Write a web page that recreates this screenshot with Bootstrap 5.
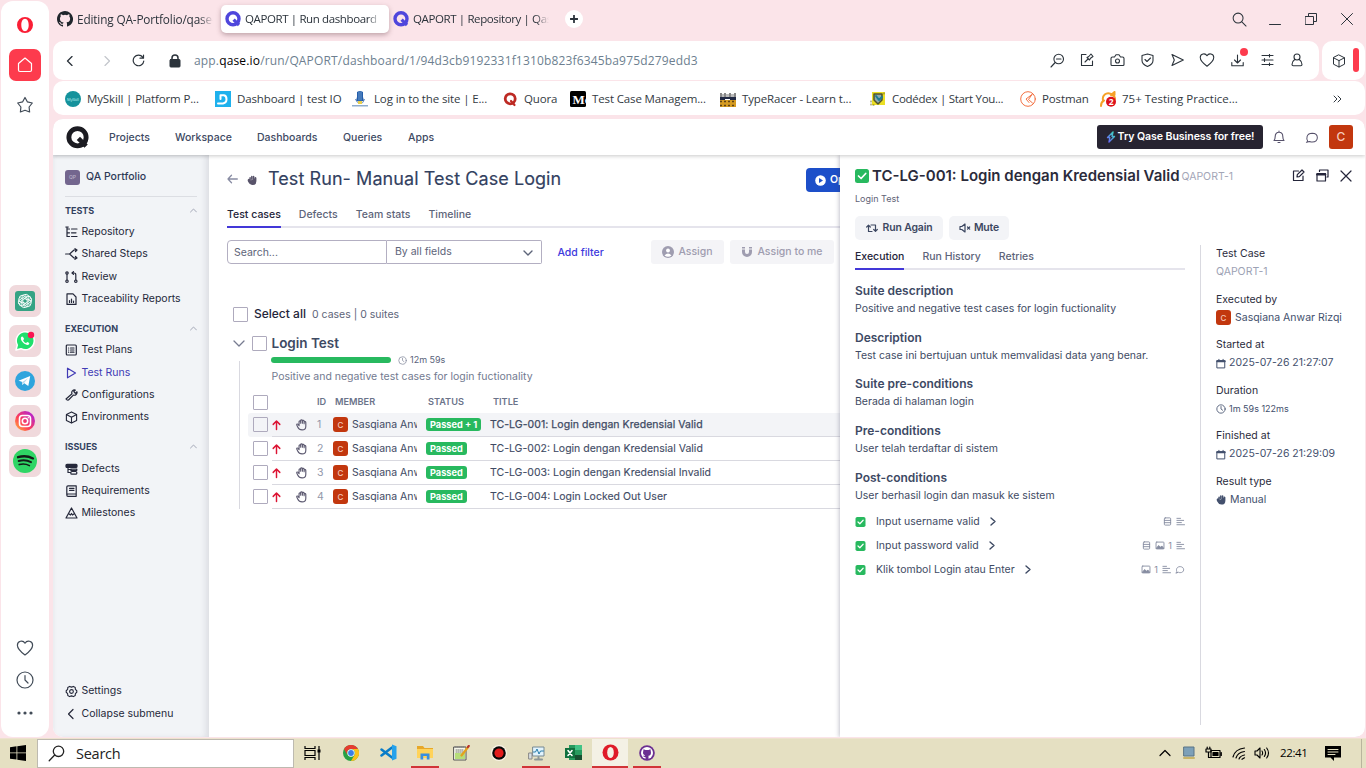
<!DOCTYPE html>
<html lang="en">
<head>
<meta charset="utf-8">
<title>QAPORT | Run dashboard</title>
<link href="https://cdn.jsdelivr.net/npm/bootstrap@5.3.0/dist/css/bootstrap.min.css" rel="stylesheet">
<style>
body{width:1366px;height:768px;overflow:hidden;background:#fbe4e9;font-family:"Open Sans","Noto Sans",sans-serif;font-size:12px;line-height:16px;color:#2b333b}
svg{display:block;flex:none;fill:none}
svg:not([stroke]){stroke:currentColor}
svg:not([stroke-linecap]){stroke-linecap:round;stroke-linejoin:round}
.white{background:#fff}
.desk{height:738px;padding-left:1px;padding-right:1px}
.rail{width:48px;height:736px;margin-top:1px;border-radius:12px;color:#414b57}
.tile{width:32px;height:32px;border-radius:7px;background:#f0d9dc;margin-bottom:8px}
.tile.home{background:#fd3b4d;color:#fff}
.browser{margin-left:4px;width:1312px}
.tabstrip{height:41px;padding-top:5px}
.tabx{width:168px;height:28px;padding:0 8px 0 4px;gap:4px;border-radius:5px;font-size:11.8px;letter-spacing:-.15px}
.tabx.tight{font-size:11.5px;letter-spacing:-.38px}
.tabx.on{background:#fff;box-shadow:0 2px 5px rgba(80,40,50,.35)}
.tabx span{width:140px;overflow:hidden;white-space:nowrap;-webkit-mask-image:linear-gradient(90deg,#000 90%,transparent)}
.plus{width:18px;height:18px;margin-left:8px}
.win{width:36px;height:28px}
.addr{height:39px;border-radius:10px}
.cell{width:30px}
.url{font-size:12px;color:#6d7f90;letter-spacing:.16px}
.marks{height:34px;margin-top:1px;border-radius:10px;padding:1px 0 0 12px;font-size:11.5px;letter-spacing:-.13px;color:#333a42}
.bm{gap:6px;width:150px;white-space:nowrap}
.app{margin-top:4px;height:618px;border-radius:10px;overflow:hidden;font-family:Inter,sans-serif;font-size:10.5px;color:#3e4a63;position:relative}
.apphead{height:36px;box-shadow:0 1px 4px rgba(0,0,0,.22);z-index:5;position:relative;padding:0 12px 0 13px}
.apphead a{color:#414b66;text-decoration:none;font-weight:500}
.try{width:166px;height:24px;border-radius:3px;background:#272431;color:#fff;font-weight:600;font-size:10.6px;letter-spacing:-.08px}
.av{width:15px;height:15px;border-radius:3px;background:#c2370e;color:#f4c9ba;font-size:8px;font-weight:500}
.side{width:156px;height:582px;background:#f2f4f7;padding:10px 12px 12px;box-shadow:inset -5px 0 6px -2px rgba(60,60,80,.12),inset 3px 0 4px -2px rgba(60,60,80,.06);color:#25283a}
.side .it{height:22.4px;gap:3.5px}
.side .hd{height:28.8px;padding-bottom:3px;font-size:9px;line-height:14px;font-weight:700;color:#33415f}
.side .hd svg{color:#a3a7b6}
.proj{height:31px;border-bottom:1px solid #dcdee3;padding-bottom:8px;gap:6px;font-weight:500;color:#2f3a57;margin-top:1px}
.main{width:631px;height:582px;padding-left:18px;overflow:hidden}
.ttl{height:24px;margin-top:12px;gap:10px}
.ttl h1{font-size:18px;font-weight:400;line-height:24px;color:#33415f;-webkit-text-stroke:.15px #33415f;width:293px;letter-spacing:.07px}
.openbtn{width:110px;height:24px;background:#1d4fc9;margin:2px 0 0 235px;padding:0 0 0 9px;gap:4px;font-size:10.5px;font-weight:600;border-radius:4px;color:#fff}
.tabrow{border-bottom:2px solid #e5e4ec;gap:18px;height:26px;font-weight:500;color:#5d6479}
.tabrow b{font-weight:500;color:#24253a;border-bottom:2px solid #4338d8;margin-bottom:-2px}
.tabrow>*{height:26px;line-height:25px;white-space:nowrap}
.fld{height:24px;border:1px solid #b3afc2;color:#5d6479}
.dis{height:24px;background:#f4f4f7;border-radius:3px;color:#9f9db0;font-weight:500;gap:4px}
.cb{width:15px;height:15px;border:1px solid #aeaabd;border-radius:1px;flex:none}
.tr0{height:24px;margin-left:8px;width:600px;padding-left:5px;white-space:nowrap}
.tr0 .cb{margin-top:-1px}
.tr0.act{background:#f3f4f7;border-radius:3px}
.tr0 .ln{height:24px;border-bottom:1px solid #d9d9e0;width:568px;margin-left:4px}
.tr0 .ttx{-webkit-text-stroke:.1px}
.act .ttx{-webkit-text-stroke:.25px;letter-spacing:.05px}
.passed{height:13px;line-height:13px;background:#28b95f;color:#fff;font-weight:700;font-size:9.2px;border-radius:3px;padding:0 4px}
.panel{position:absolute;left:787px;top:36px;width:525px;height:582px;background:#fff;box-shadow:-1px 0 4px rgba(60,60,90,.3);padding:10px 12px 12px 15px}
.pbtn{height:24px;background:#f3f4f7;border-radius:5px;font-weight:600;font-size:10.4px;letter-spacing:-.12px;color:#3c4761;gap:5px}
.sec{height:46.7px}
.sec h6{font-size:12px;font-weight:600;line-height:18px;margin:0;color:#3d4964}
.sec p{margin:0;line-height:17px;white-space:nowrap}
.step{height:24px}
.step .ics{color:#868ca0;gap:4px;font-size:9px}
.meta{height:45.6px;white-space:nowrap}
.meta .lb{color:#2a2b3c;line-height:18px;height:18px}
.meta .vl{height:18px;gap:3px;color:#43506d}
.task{height:30px;background:#e5e0c2;color:#000;border-top:1px solid #eee2cf}
.sbox{width:257px;height:29px;border:1px solid #bdbab0;font-size:14.5px;letter-spacing:-.25px;color:#222}
.tk{height:29px;width:37px;padding-bottom:2px}
.tk.open{box-shadow:inset 0 -2px #d13438}
</style>
</head>
<body>
<svg width="0" height="0" class="position-absolute">
<defs>
<linearGradient id="ig" x1="0" y1="1" x2="1" y2="0"><stop offset="0" stop-color="#ffc13a"/><stop offset=".4" stop-color="#ff3f55"/><stop offset="1" stop-color="#a21cf0"/></linearGradient>
<linearGradient id="bolt" x1="0" y1="1" x2="1" y2="0"><stop offset="0" stop-color="#6f5cff"/><stop offset="1" stop-color="#38e0b8"/></linearGradient>
<symbol id="q" viewBox="0 0 16 16"><circle cx="8" cy="7.800" r="6" fill="none" stroke-width="3.400"/><path d="M8.600 8.600 14 14" fill="none" stroke-width="3.200" stroke-linecap="butt"/></symbol>
<symbol id="hand" viewBox="0 0 16 16"><path d="M4.500 9V4.800M7 7V2.800M9.600 7V3M12.200 8V4.600M4.500 9 2.600 7.400C1.500 8 2 9 2.800 10.500c1 2.200 2.600 3.800 5 3.800 3.200 0 4.800-2 4.800-5V5" fill="currentColor" stroke-width="2.200"/></symbol>
<symbol id="hando" viewBox="0 0 16 16"><path d="M5 9.500V4.500a1 1 0 0 1 2 0M7 6.500V3.300a1 1 0 0 1 2.100 0v3.200M9.100 4a1 1 0 0 1 2.100 0v3M11.200 5.500a1 1 0 0 1 2.100 0V10c0 3-2 4.600-4.600 4.600-3 0-4.400-1.600-5.400-3.600L2.200 8.600c-.5-1.300 1-1.600 1.700-.7L5 9.500" fill="none" stroke-width="1.400"/></symbol>
<symbol id="chk" viewBox="0 0 14 14"><rect width="14" height="14" rx="2.500" fill="#28b95f" stroke="none"/><path d="m3.500 7 2.600 2.500 4.600-5" stroke="#fff" stroke-width="1.700" fill="none"/></symbol>
<symbol id="clk" viewBox="0 0 12 12"><circle cx="6" cy="6" r="5"/><path d="M6 3v3l2 1.500"/></symbol>
<symbol id="cal" viewBox="0 0 12 12"><path d="M1.500 2.500h9v8.800h-9zM3.500 1v2M8.500 1v2" stroke-width="1.200"/><path d="M1.500 3.400h9" stroke-width="2.400"/></symbol>
<symbol id="up" viewBox="0 0 12 12"><path d="M6 10.800V2M2.400 5.300 6 1.700l3.600 3.600" stroke="#dc1433" stroke-width="1.600"/></symbol>
<symbol id="heart" viewBox="0 0 18 18"><path d="M9 16C5 13 1.400 10 1.400 6.200 1.400 1.800 7 .8 9 4.200c2-3.400 7.600-2.400 7.600 2C16.600 10 13 13 9 16z"/></symbol>
<symbol id="lines" viewBox="0 0 10 10"><path d="M1 1.500h4M1 3.800h7.500M1 6.200h5M1 8.600h8.500"/></symbol>
<symbol id="db" viewBox="0 0 10 10"><rect x="1.500" y="1" width="7" height="8" rx="1"/><path d="M1.500 3.800h7M1.500 6.300h7"/></symbol>
<symbol id="img" viewBox="0 0 10 10"><rect x=".6" y="1.200" width="8.800" height="7.600" rx=".8"/><path d="m1 8 2.500-3 2 2L7 5.500 9 8z" fill="currentColor"/></symbol>
<symbol id="cub" viewBox="0 0 14 14"><path d="m7 1 5.500 2.800v6.400L7 13l-5.500-2.800V3.800zM1.500 3.800 7 6.600l5.500-2.800M7 6.600V13"/></symbol>
<symbol id="chat" viewBox="0 0 14 14"><path d="M2.600 11.500C.4 8.500 1 2.500 7.200 2.500c7.400.2 7.400 9.500 0 9.400-1.200 0-1.800-.2-2.600-.6L1 12.200z"/></symbol>
</defs></svg>

<div class="desk d-flex">
 <aside class="rail white d-flex flex-column align-items-center">
  <svg width="18" height="18" viewBox="0 0 18 18" style="margin-top:15px"><path fill="#fa1e35" stroke="none" fill-rule="evenodd" d="M9 1a8 8 0 1 1 0 16A8 8 0 0 1 9 1zm0 1.800c-2.300 0-3.700 2.800-3.700 6.200s1.400 6.200 3.700 6.200 3.700-2.800 3.700-6.200S11.300 2.800 9 2.800z"/></svg>
  <div class="tile home d-flex align-items-center justify-content-center" style="margin-top:15px"><svg width="18" height="18" viewBox="0 0 18 18" stroke-width="1.200"><path d="M2.500 7.500 9 2l6.500 5.500V14q0 1.500-1.500 1.500H4q-1.500 0-1.500-1.500z"/></svg></div>
  <svg width="18" height="18" viewBox="0 0 18 18" stroke-width="1.200" style="margin-top:7px"><path d="m9 1.500 2.300 4.300 5 1.200-3.200 4 .5 5L9 14.300 4.400 16l.5-5-3.200-4 5-1.200z"/></svg>
  <div class="d-flex flex-column" style="margin-top:171px">
   <div class="tile d-flex align-items-center justify-content-center"><svg width="20" height="20" viewBox="0 0 20 20"><rect width="20" height="20" rx="3" fill="#35a384" stroke="none"/><g stroke="#fff" stroke-width=".9"><path id="pt" d="M10 3.500c2-.8 4 .8 3.800 2.800v4L10 12.500M7 7.800v-2.500Q8.500 2.500 11 4"/><use href="#pt" transform="rotate(60 10 10)"/><use href="#pt" transform="rotate(120 10 10)"/><use href="#pt" transform="rotate(180 10 10)"/><use href="#pt" transform="rotate(240 10 10)"/><use href="#pt" transform="rotate(300 10 10)"/></g></svg></div>
   <div class="tile d-flex align-items-center justify-content-center"><svg width="20" height="20" viewBox="0 0 20 20" stroke="none"><path d="m1 19 1.300-5A9 9 0 1 1 6 17.700z" fill="#20df6c" stroke="#fff" stroke-width="1.500"/><path d="M7 5.500c-2 1-1.200 4 1.200 6.200s5 3 6 1.200c.3-.9 0-1.200-1.900-2l-1.200 1.200c-1.500-.6-2.400-1.500-3-2.900l1-1.100c-.7-1.700-1-2.600-2.100-2.600z" fill="#fff"/><circle cx="16" cy="4" r="3.200" fill="#fa1653"/></svg></div>
   <div class="tile d-flex align-items-center justify-content-center"><svg width="20" height="20" viewBox="0 0 20 20" stroke="none"><circle cx="10" cy="10" r="10" fill="#2fa4dd"/><path d="m3.500 9.800 11.700-4.700-1.900 10-4-2.800-2 1.700-.5-3.300z" fill="#fff"/><path d="m7 11.300 6-4-4 4.800-1.600 1.600z" fill="#b5d9ed"/></svg></div>
   <div class="tile d-flex align-items-center justify-content-center"><svg width="20" height="20" viewBox="0 0 20 20"><circle cx="10" cy="10" r="10" fill="url(#ig)" stroke="none"/><g stroke="#fff" stroke-width="1.600"><rect x="4.500" y="4.500" width="11" height="11" rx="3"/><circle cx="10" cy="10" r="2.700"/></g><circle cx="13.300" cy="6.700" r=".8" fill="#fff" stroke="none"/></svg></div>
   <div class="tile d-flex align-items-center justify-content-center"><svg width="24" height="24" viewBox="0 0 24 24" stroke="#131c18"><circle cx="12" cy="12" r="12" fill="#2fd565" stroke="none"/><path d="M5 8.200q8-2.400 15 1.200" stroke-width="2.300"/><path d="M5.700 12q6.500-2 12.300 1.100" stroke-width="2"/><path d="M6.200 15.600q5.500-1.500 10.200 1" stroke-width="1.600"/></svg></div>
  </div>
  <svg width="18" height="18" stroke-width="1.200" style="margin-top:154px"><use href="#heart"/></svg>
  <svg width="18" height="18" viewBox="0 0 18 18" stroke-width="1.200" style="margin-top:14px"><circle cx="9" cy="9" r="8"/><path d="M9 4.500V9l3 3"/></svg>
  <svg width="18" height="6" viewBox="0 0 18 6" stroke="none" style="margin-top:21px;fill:#414b57"><circle cx="3" cy="3" r="1.600"/><circle cx="9" cy="3" r="1.600"/><circle cx="15" cy="3" r="1.600"/></svg>
 </aside>

 <div class="browser">
  <div class="tabstrip d-flex">
   <div class="tabx d-flex align-items-center"><svg width="16" height="16" viewBox="0 0 16 16"><path style="fill:#20262c" stroke="none" d="M8 0C3.580 0 0 3.580 0 8c0 3.540 2.290 6.530 5.470 7.590.4.070.55-.17.55-.38v-1.490c-2 .37-2.530-.49-2.690-.94-.09-.23-.48-.94-.82-1.130-.28-.15-.68-.52-.01-.53.63-.01 1.080.58 1.230.82.72 1.210 1.870.87 2.330.66.07-.52.28-.87.51-1.070-1.780-.2-3.640-.89-3.640-3.950 0-.87.31-1.590.82-2.150-.08-.2-.36-1.020.08-2.120 0 0 .67-.21 2.200.82a7.600 7.600 0 0 1 4 0c1.530-1.040 2.200-.82 2.200-.82.44 1.100.16 1.920.08 2.120.51.56.82 1.270.82 2.150 0 3.070-1.870 3.750-3.650 3.950.29.25.54.73.54 1.480v2.200c0 .21.15.46.55.38A8 8 0 0 0 8 0z"/></svg><span>Editing QA-Portfolio/qase-</span></div>
   <div class="tabx tight on d-flex align-items-center"><svg width="16" height="16" stroke="#4f46dc"><use href="#q"/></svg><span>QAPORT | Run dashboard</span></div>
   <div class="tabx tight d-flex align-items-center"><svg width="16" height="16" stroke="#4f46dc"><use href="#q"/></svg><span>QAPORT | Repository | Qase</span></div>
   <div class="plus white rounded-circle d-flex align-items-center justify-content-center" style="margin-top:5px"><svg width="8" height="8" viewBox="0 0 8 8" stroke-width="1.800"><path d="M4 .5v7M.5 4h7"/></svg></div>
   <div class="d-flex ms-auto">
    <div class="win d-flex align-items-center justify-content-center"><svg width="15" height="15" viewBox="0 0 16 16" stroke-width="1.100"><circle cx="6.500" cy="6.500" r="5.300"/><path d="m10.500 10.500 4.500 4.500"/></svg></div>
    <div class="win d-flex align-items-center justify-content-center"><svg width="12" height="12" viewBox="0 0 12 12"><path d="M.5 11.500h11"/></svg></div>
    <div class="win d-flex align-items-center justify-content-center"><svg width="12" height="12" viewBox="0 0 12 12"><path d="M.5 3.500h8v8h-8zM3.500 3.500v-3h8v8h-3"/></svg></div>
    <div class="win d-flex align-items-center justify-content-center"><svg width="12" height="12" viewBox="0 0 12 12"><path d="m.5.5 11 11m0-11-11 11"/></svg></div>
   </div>
  </div>

  <div class="d-flex" style="gap:3px">
   <div class="addr white d-flex align-items-center" style="width:1266px;padding-left:13px">
    <svg width="8" height="10" viewBox="0 0 8 10" stroke-width="1.300"><path d="M6 .5 1.500 5 6 9.500"/></svg>
    <svg width="8" height="10" viewBox="0 0 8 10" stroke="#c3c6cc" stroke-width="1.200" style="margin-left:29px"><path d="M2 .5 6.500 5 2 9.500"/></svg>
    <svg width="13" height="13" viewBox="0 0 13 13" stroke-width="1.200" style="margin-left:21px"><path d="M10.800 3.300A5.300 5.300 0 1 0 11.800 7M11.500 1v3.200H8"/></svg>
    <svg width="12" height="14" viewBox="0 0 12 14" style="margin-left:24px"><path d="M3 6V4a3 3 0 0 1 6 0v2" stroke-width="1.500"/><rect x="1" y="5.500" width="10" height="7.500" rx=".8" fill="#2b333b" stroke-width="1"/></svg>
    <div class="url" style="margin-left:13px">app.<span class="text-black">qase.io</span>/run/QAPORT/dashboard/1/94d3cb9192331f1310b823f6345ba975d279edd3</div>
    <div class="d-flex ms-auto align-items-center" style="margin-right:7px;padding-bottom:1px">
     <div class="cell d-flex justify-content-center"><svg width="15" height="15" viewBox="0 0 15 15" stroke-width="1.100"><circle cx="8.700" cy="6" r="4.800"/><path d="M6.500 6h4.500M5.200 9.500 1 14"/></svg></div>
     <div class="cell d-flex justify-content-center"><svg width="14" height="14" viewBox="0 0 14 14" stroke-width="1.100"><path d="M6 1.500H1.500v11h11V8M5 9l3-3M7 4.500l2.500 2.500 1-1.800L13 3.500 11 1 8.800 3.500z"/></svg></div>
     <div class="cell d-flex justify-content-center"><svg width="15" height="14" viewBox="0 0 15 14" stroke-width="1.100"><path d="M2.500 4h2L6 1.800h3L10.500 4h2q1.500 0 1.500 1.500v6q0 1-1 1H2q-1 0-1-1v-6Q1 4 2.500 4z"/><circle cx="7.500" cy="8" r="2"/></svg></div>
     <div class="cell d-flex justify-content-center"><svg width="13" height="14" viewBox="0 0 13 14" stroke-width="1.100"><path d="M6.500 1 12 2.500v5c0 3-3 5-5.500 6C4 12.500 1 10.500 1 7.500v-5zM4 6.500l2 2 3.500-3.500"/></svg></div>
     <div class="cell d-flex justify-content-center"><svg width="13" height="14" viewBox="0 0 13 14" stroke-width="1.100"><path d="M1 1.500 12.300 7 1 12.500 3.300 7z"/></svg></div>
     <div class="cell d-flex justify-content-center"><svg width="16" height="16" stroke-width="1.200"><use href="#heart"/></svg></div>
     <div class="cell d-flex justify-content-center position-relative"><svg width="13" height="14" viewBox="0 0 13 14" stroke-width="1.100"><path d="M.8 9.500v3.300h11.400V9.500M6.500 2v7.500M3.500 7l3 3 3-3"/></svg><i class="position-absolute rounded-circle" style="width:8px;height:8px;background:#fd3b4d;left:18px;top:-5px"></i></div>
     <div class="cell d-flex justify-content-center"><svg width="13" height="12" viewBox="0 0 13 12" stroke-width="1.100"><path d="M1 1.500h11M1 6h11M1 10.500h11M8.500 0v3M3.500 4.500v3M8.500 9v3"/></svg></div>
     <div class="cell d-flex justify-content-center"><svg width="12" height="14" viewBox="0 0 12 14" stroke-width="1.100"><circle cx="6" cy="4" r="3"/><path d="M3.700 6.500C1.500 8 1 10 1 11.500q0 1.200 1.200 1.200h7.600q1.200 0 1.200-1.200C11 10 10.500 8 8.300 6.500"/></svg></div>
    </div>
   </div>
   <div class="addr white d-flex align-items-center" style="width:43px;padding-left:10px"><svg width="14" height="14"><use href="#cub"/></svg><i class="rounded-pill" style="width:6px;height:24px;background:#fd3b4d;margin-left:7px;margin-top:-1px"></i></div>
  </div>

  <div class="marks white d-flex align-items-center">
   <div class="bm d-flex align-items-center"><svg width="16" height="16" viewBox="0 0 16 16"><circle cx="8" cy="8" r="8" fill="#15929c" stroke="none"/><text x="2" y="9.500" font-size="4" fill="#bdeff0" stroke="none" letter-spacing="-.2">MySkill</text></svg>MySkill | Platform P...</div>
   <div class="bm d-flex align-items-center" style="width:137px"><svg width="16" height="16" viewBox="0 0 16 16"><path fill="#1eb1ed" stroke="none" d="M0 0h16v16H0z"/><path d="M5.500 8V4.300H9q2.500.5 2.500 4T8 12.500H3" stroke="#fff" stroke-width="2"/></svg>Dashboard | test IO</div>
   <div class="bm d-flex align-items-center"><svg width="16" height="16" viewBox="0 0 16 16" stroke="none"><path fill="#235daa" d="M5 1q3-2 6 0v5l1 4H4l1-4z"/><path d="M7 1v8M9 1v8" stroke="#8bb5df" stroke-width=".7"/><path d="M3.500 8.500Q5 12 8 12.500t4.500-4" stroke="#5f87b9" fill="none"/><path fill="#e8cf4a" d="M6 10h4v3H6z"/><path fill="#8fadcd" d="M0 14h16v1.500H0z"/></svg>Log in to the site | E...</div>
   <div class="bm d-flex align-items-center" style="width:68px"><svg width="16" height="16" viewBox="0 0 16 16" stroke="#bd2a24"><circle cx="8.200" cy="7.800" r="5" stroke-width="2.800"/><path d="m9 10 3.500 4" stroke-width="2.200"/></svg>Quora</div>
   <div class="bm d-flex align-items-center"><svg width="16" height="16" viewBox="0 0 16 16"><rect width="16" height="16" rx="1.500" fill="#000" stroke="none"/><text x="2.500" y="12.500" font-family="Liberation Serif" font-weight="bold" font-size="13" fill="#fff" stroke="none">Mc</text></svg>Test Case Managem...</div>
   <div class="bm d-flex align-items-center"><svg width="16" height="16" viewBox="0 0 16 16" stroke-linecap="butt"><path d="M0 3h16v3H0z" fill="#bbb" stroke="none"/><path d="M1 2v4M5 2v4M10 2v4M15 2v4" stroke="#888" stroke-width="2"/><path d="M0 7h16M0 9h5m5 0h6" stroke="#222a45" stroke-width="2"/><path d="M0 9h16v7H0z" fill="#d69b20" stroke="none"/><path d="M0 10.500h16M0 14.500h16" stroke="#5e4214" stroke-dasharray="2 2" stroke-width="1.500"/></svg>TypeRacer - Learn t...</div>
   <div class="bm d-flex align-items-center" style="letter-spacing:-.28px"><svg width="16" height="16" viewBox="0 0 16 16"><path fill="#ebdf25" stroke="none" d="M2 1h13v13H2z"/><path d="M4 3h8v6l-4 4-4-4z" fill="#8caab0" stroke="#52532b" stroke-width="1.500"/><path d="m6 5 3 4 3-3" stroke="#1e7c92" stroke-width="2"/><path d="M1 10v4h4M14 2v3" stroke="#78741f" stroke-dasharray="1 2"/></svg>Codédex | Start You...</div>
   <div class="bm d-flex align-items-center" style="width:80px"><svg width="16" height="16" viewBox="0 0 16 16" stroke="#f37042"><circle cx="8" cy="8" r="7.300"/><path d="M12 3.500 6 8l3 3.500M12 3.500 8.500 8.500l4 3.500"/></svg>Postman</div>
   <div class="bm d-flex align-items-center" style="letter-spacing:0"><svg width="16" height="16" viewBox="0 0 16 16"><path d="M11 3C6 .5 2 5 3 9M1 15Q1 11 4 9.500M14.500 1 11 4q4 .5 4 4M14.500 1V4" stroke="#f6a127" stroke-width="2"/><circle cx="11" cy="10.800" r="5" fill="#dd101b" stroke="none"/><text x="8.700" y="13.800" font-size="8.500" font-weight="bold" fill="#fff" stroke="none">2</text></svg>75+ Testing Practice...</div>
   <svg width="9" height="8" viewBox="0 0 9 8" class="ms-auto" style="margin-right:23px"><path d="m1 1 3 3-3 3M5 1l3 3-3 3"/></svg>
  </div>

  <div class="app white">
   <header class="apphead white d-flex align-items-center">
    <svg width="23" height="23" stroke="#1c1c22"><use href="#q"/></svg>
    <nav class="d-flex" style="margin-left:20px;padding-top:1px"><a style="width:66px">Projects</a><a style="width:82px">Workspace</a><a style="width:86px">Dashboards</a><a style="width:65px">Queries</a><a>Apps</a></nav>
    <div class="try ms-auto d-flex align-items-center justify-content-center"><svg width="10" height="12" viewBox="0 0 10 12" stroke="url(#bolt)" stroke-width="1.400" style="margin-right:2px"><path d="M7 1 1.500 6.500h2.300L3 11l5.500-5.500H6z"/></svg>Try Qase Business for free!</div>
    <svg width="12" height="14" viewBox="0 0 12 14" color="#56516b" stroke-width="1.100" style="margin-left:10px"><path d="M1 10.500c1.200-1.500 1.200-2.500 1.200-4C2.200 4 3.700 2.300 6 2.300S9.800 4 9.800 6.500c0 1.500 0 2.500 1.200 4zM6 1v1.300M5 12.500h2"/></svg>
    <svg width="14" height="13" color="#56516b" stroke-width="1.100" style="margin-left:20px"><use href="#chat"/></svg>
    <div class="av d-flex align-items-center justify-content-center" style="width:24px;height:24px;font-size:12px;margin-left:10px">C</div>
   </header>

   <div class="d-flex">
    <aside class="side d-flex flex-column">
     <div class="proj d-flex align-items-center"><div class="av d-flex align-items-center justify-content-center" style="background:#73668e;color:#b9b1c9;font-size:5px">QP</div>QA Portfolio</div>
     <div class="hd d-flex align-items-end justify-content-between" style="height:23.600px">TESTS<svg width="7" height="12" viewBox="0 0 7 12"><path d="m.5 6 3-3 3 3"/></svg></div>
     <div class="it d-flex align-items-center"><svg width="13" height="12" viewBox="0 0 13 12" stroke-width="1.200"><path d="M2 1v9.500h2.500M2 3h2.500M2 6.800h2.500M.8 1h2.500M6.500 3H12M6.500 6.800H11M6.500 10.500H12"/></svg>Repository</div>
     <div class="it d-flex align-items-center"><svg width="13" height="12" viewBox="0 0 13 12" stroke-width="1.200"><path d="M.6 6h4M12 2H9L4.600 6 9 10h3M10 .7 12 2l-1.500 1.500M10.500 8.500 12 10l-2 1.300"/></svg>Shared Steps</div>
     <div class="it d-flex align-items-center"><svg width="13" height="12" viewBox="0 0 13 12" stroke-width="1.200"><circle cx="2" cy="2" r="1.200"/><circle cx="2" cy="10.200" r="1.200"/><circle cx="10.800" cy="10.200" r="1.200"/><path d="M2 3.200V9M10.800 9V4Q10.800 2 9 2H7M8.500.6 7 2l1.500 1.400"/></svg>Review</div>
     <div class="it d-flex align-items-center"><svg width="13" height="12" viewBox="0 0 13 12" stroke-width="1.200"><path d="M2 .8h6L11 4v7.400H2zM4.500 9.500V7.500M6.500 9.500V6M8.500 9.500V8"/></svg>Traceability Reports</div>
     <div class="hd d-flex align-items-end justify-content-between">EXECUTION<svg width="7" height="12" viewBox="0 0 7 12"><path d="m.5 6 3-3 3 3"/></svg></div>
     <div class="it d-flex align-items-center"><svg width="13" height="12" viewBox="0 0 13 12" stroke-width="1.200"><rect x="1.300" y="1" width="10" height="10" rx="1"/><path d="M3.500 4h.2M3.500 6h.2M3.500 8.200h.2M5.500 4H9M5.500 6H9M5.500 8.200H9"/></svg>Test Plans</div>
     <div class="it d-flex align-items-center" style="color:#403ab5"><svg width="13" height="12" viewBox="0 0 13 12" stroke-width="1.200"><path d="M2.500 1.200v9.600L10.500 6z"/></svg>Test Runs</div>
     <div class="it d-flex align-items-center"><svg width="13" height="12" viewBox="0 0 13 12" stroke-width="1.200"><path d="M7 4.800C6 2.500 8 .5 10.300 1L8.800 2.700l1.500 1.600L12 2.800c.5 2.200-1.500 4-3.700 3.300L3.500 11q-1.500.5-2.500-1z"/></svg>Configurations</div>
     <div class="it d-flex align-items-center"><svg width="13" height="13" stroke-width="1.200"><use href="#cub"/></svg>Environments</div>
     <div class="hd d-flex align-items-end justify-content-between">ISSUES<svg width="7" height="12" viewBox="0 0 7 12"><path d="m.5 6 3-3 3 3"/></svg></div>
     <div class="it d-flex align-items-center"><svg width="13" height="12" viewBox="0 0 13 12" stroke-width="1.200"><rect x="1" y="1.300" width="11" height="3.200" rx="1" fill="currentColor"/><path d="M3 5v4.500h2.500M3 6.500h3"/><rect x="5.800" y="6" width="6" height="1.300"/><rect x="5.800" y="8.500" width="6" height="2.700" rx="1"/></svg>Defects</div>
     <div class="it d-flex align-items-center"><svg width="13" height="12" viewBox="0 0 13 12" stroke-width="1.200"><path d="M1.800 10V2q0-1.200 1.200-1.200h8.200v10.500H3Q1.800 11.300 1.800 10 2 9 3 9h8M4.500 3.300H9M4.500 5.300H9"/></svg>Requirements</div>
     <div class="it d-flex align-items-center"><svg width="13" height="12" viewBox="0 0 13 12" stroke-width="1.200"><path d="M6.500 1 12 11H1zM3.500 6.500l2 1.500 1-1.500 1 1.500 2-1.500"/></svg>Milestones</div>
     <div class="it d-flex align-items-center mt-auto"><svg width="13" height="13" viewBox="0 0 14 14" stroke-width="1.200"><path d="m5 1.500 2 .8 2-.8 2 1.200.2 2.100 1.500 1.400v1.600l-1.500 1.400-.2 2.100-2 1.200-2-.8-2 .8-2-1.200-.2-2.100L1.300 7.800V6.200l1.500-1.400L3 2.700z"/><circle cx="7" cy="7" r="2"/></svg>Settings</div>
     <div class="it d-flex align-items-center"><svg width="13" height="12" viewBox="0 0 13 12" stroke-width="1.200"><path d="M8 1.500 3.500 6 8 10.500"/></svg>Collapse submenu</div>
    </aside>

    <main class="main">
     <div class="ttl d-flex align-items-center">
      <svg width="11" height="10" viewBox="0 0 11 10" stroke="#888ca3" stroke-width="1.300"><path d="M10.300 5H1M4.500 1.300 1 5l3.500 3.700"/></svg>
      <svg width="11" height="12" color="#58536a" style="margin:1px 0 0 -1px"><use href="#hand"/></svg>
      <h1 class="m-0 text-nowrap flex-shrink-0">Test Run- Manual Test Case Login</h1>
      <div class="openbtn d-flex align-items-center justify-content-start flex-shrink-0"><svg width="11" height="11" viewBox="0 0 11 11" stroke="none"><circle cx="5.500" cy="5.500" r="5.300" fill="#fff"/><path d="M4 3v5l4-2.500z" fill="#1d4fc9"/></svg>Open</div>
     </div>
     <div class="tabrow d-flex" style="margin-top:11px"><b>Test cases</b><span>Defects</span><span>Team stats</span><span>Timeline</span></div>
     <div class="d-flex align-items-center" style="margin-top:12px">
      <div class="fld rounded-start-1 d-flex align-items-center" style="width:160px;padding:1px 0 0 6px">Search...</div>
      <div class="fld d-flex align-items-center justify-content-between" style="width:155px;border-left:0;border-radius:0 2px 2px 0;padding:0 8px 1px">By all fields<svg width="10" height="6" viewBox="0 0 10 6" stroke-width="1.400" style="margin-top:2px"><path d="m1 1 4 4 4-4"/></svg></div>
      <div style="color:#403add;font-weight:500;margin-left:15.500px;width:93.500px;padding-top:1px">Add filter</div>
      <div class="dis d-flex align-items-center justify-content-center" style="width:73px"><svg width="12" height="12" viewBox="0 0 12 12" stroke="none"><circle cx="6" cy="6" r="6" fill="#9f9db0"/><circle cx="6" cy="4.500" r="1.900" fill="#fff"/><path d="M2.500 9.500q3.500-4 7 0-3.500 2.500-7 0z" fill="#fff"/></svg>Assign</div>
      <div class="dis d-flex align-items-center justify-content-center text-nowrap" style="width:104px;margin-left:6px"><svg width="12" height="12" viewBox="0 0 12 12" stroke-width="3" stroke-linecap="butt"><path d="M2.500 3.500V6a3.500 3.500 0 0 0 7 0V3.500M2.500 1v1.500M9.500 1v1.500"/></svg>Assign to me</div>
     </div>
     <div class="d-flex align-items-center" style="margin-top:42px;margin-left:6px;height:16px"><i class="cb"></i><span style="font-size:12px;font-weight:500;color:#24253a;margin-left:6px;width:58px" class="text-nowrap">Select all</span><span style="color:#5d6479;padding-top:1px">0 cases | 0 suites</span></div>
     <div class="d-flex align-items-center" style="margin-top:12px;margin-left:6px;height:18px"><svg width="12" height="7" viewBox="0 0 12 7" stroke="#777b90" stroke-width="1.300"><path d="m1 1 5 5 5-5"/></svg><i class="cb" style="margin-left:7px"></i><span style="font-size:13.500px;font-weight:600;margin-left:4.500px">Login Test</span></div>
     <div class="d-flex align-items-center" style="height:15px;padding-top:1px;margin-left:44px"><i class="rounded-pill" style="width:120px;height:6px;background:#28b95f"></i><svg width="9" height="9" color="#858b9d" style="margin:0 3px 0 7px"><use href="#clk"/></svg><span style="font-size:9px;color:#5a637b">12m 59s</span></div>
     <div style="margin-left:44.500px;height:20px;line-height:20px;color:#727a90">Positive and negative test cases for login fuctionality</div>
     <div style="margin-left:12px;margin-top:-26px;padding-top:26px;border-left:1px solid #d9d9e0">
      <div class="d-flex align-items-center" style="height:26px;padding:4px 0 0 13px;font-size:9.200px;font-weight:600;color:#6b738a"><i class="cb"></i><span style="margin-left:49px;width:18px">ID</span><span style="width:93px">MEMBER</span><span style="width:64px">STATUS</span><span style="margin-left:1px">TITLE</span></div>
      <div class="tr0 act d-flex align-items-center"><i class="cb"></i><div class="ln d-flex align-items-center"><svg width="11" height="12" style="margin-left:-1px"><use href="#up"/></svg><svg width="13" height="13" style="margin:0 9px 0 13px" color="#5c5970"><use href="#hando"/></svg><span style="width:16px;color:#9297aa">1</span><span class="av d-flex align-items-center justify-content-center">C</span><span class="overflow-hidden" style="width:65px;margin-left:4px">Sasqiana Anw</span><span style="width:64px;margin-left:9px"><span class="passed d-inline-block align-middle">Passed + 1</span></span><span class="ttx">TC-LG-001: Login dengan Kredensial Valid</span></div></div>
      <div class="tr0 d-flex align-items-center"><i class="cb"></i><div class="ln d-flex align-items-center"><svg width="11" height="12" style="margin-left:-1px"><use href="#up"/></svg><svg width="13" height="13" style="margin:0 9px 0 13px" color="#5c5970"><use href="#hando"/></svg><span style="width:16px;color:#9297aa">2</span><span class="av d-flex align-items-center justify-content-center">C</span><span class="overflow-hidden" style="width:65px;margin-left:4px">Sasqiana Anw</span><span style="width:64px;margin-left:9px"><span class="passed d-inline-block align-middle">Passed</span></span><span class="ttx">TC-LG-002: Login dengan Kredensial Valid</span></div></div>
      <div class="tr0 d-flex align-items-center"><i class="cb"></i><div class="ln d-flex align-items-center"><svg width="11" height="12" style="margin-left:-1px"><use href="#up"/></svg><svg width="13" height="13" style="margin:0 9px 0 13px" color="#5c5970"><use href="#hando"/></svg><span style="width:16px;color:#9297aa">3</span><span class="av d-flex align-items-center justify-content-center">C</span><span class="overflow-hidden" style="width:65px;margin-left:4px">Sasqiana Anw</span><span style="width:64px;margin-left:9px"><span class="passed d-inline-block align-middle">Passed</span></span><span class="ttx">TC-LG-003: Login dengan Kredensial Invalid</span></div></div>
      <div class="tr0 d-flex align-items-center"><i class="cb"></i><div class="ln d-flex align-items-center"><svg width="11" height="12" style="margin-left:-1px"><use href="#up"/></svg><svg width="13" height="13" style="margin:0 9px 0 13px" color="#5c5970"><use href="#hando"/></svg><span style="width:16px;color:#9297aa">4</span><span class="av d-flex align-items-center justify-content-center">C</span><span class="overflow-hidden" style="width:65px;margin-left:4px">Sasqiana Anw</span><span style="width:64px;margin-left:9px"><span class="passed d-inline-block align-middle">Passed</span></span><span class="ttx">TC-LG-004: Login Locked Out User</span></div></div>
     </div>
    </main>
   </div>

   <section class="panel">
    <div class="d-flex align-items-center" style="height:21px"><svg width="14" height="14"><use href="#chk"/></svg><span style="font-size:15px;font-weight:600;color:#2b2b3b;margin-left:3px" class="text-nowrap">TC-LG-001: Login dengan Kredensial Valid</span><span style="color:#a3a6b7;margin-left:2px;padding-top:3px">QAPORT-1</span>
     <svg class="ms-auto" width="13" height="13" viewBox="0 0 13 13" color="#24253a" stroke-width="1.200"><path d="M6.500 2H1.500v9.500H11V7M5 8l.3-2.300L10 1l2 2-4.700 4.700z"/></svg>
     <svg width="13" height="13" viewBox="0 0 13 13" color="#24253a" stroke-width="1.200" style="margin:0 11px"><path d="M1 4.500h8.500V12H1zM3.500 2.500V1H12v7h-1"/><path d="M1.200 5.500h8" stroke-width="2.200"/></svg>
     <svg width="12" height="12" viewBox="0 0 12 12" color="#24253a" style="margin-right:1px" stroke-width="1.200"><path d="m1 1 10 10m0-10L1 11"/></svg></div>
    <div style="font-size:9px;height:16px;margin-top:5px;line-height:16px;color:#5f6377">Login Test</div>
    <div class="d-flex" style="gap:6px;margin-top:9px;height:24px">
     <div class="pbtn d-flex align-items-center justify-content-center" style="width:88px"><svg width="12" height="10" viewBox="0 0 12 10" stroke-width="1.200"><path d="M6 8.500H2.500v-6M.7 4l1.800-1.800L4.300 4M5 2h4.500v6M7.700 6.500 9.500 8.300l1.800-1.800"/></svg>Run Again</div>
     <div class="pbtn d-flex align-items-center justify-content-center" style="width:60px;gap:3px"><svg width="12" height="10" viewBox="0 0 12 10" stroke-width="1.200"><path d="M1 3.500h1.800L6 1v8L2.800 6.500H1zM8.500 4l2.200 2.200M10.700 4 8.500 6.200"/></svg>Mute</div>
    </div>
    <div class="d-flex" style="margin-top:6px">
     <div style="width:330px">
      <div class="tabrow d-flex" style="height:24px"><b style="height:24px;line-height:21px">Execution</b><span style="line-height:21px">Run History</span><span style="line-height:21px">Retries</span></div>
      <div style="padding-top:12px">
       <div class="sec"><h6>Suite description</h6><p>Positive and negative test cases for login fuctionality</p></div>
       <div class="sec"><h6>Description</h6><p>Test case ini bertujuan untuk memvalidasi data yang benar.</p></div>
       <div class="sec"><h6>Suite pre-conditions</h6><p>Berada di halaman login</p></div>
       <div class="sec"><h6>Pre-conditions</h6><p>User telah terdaftar di sistem</p></div>
       <div class="sec" style="height:41px"><h6>Post-conditions</h6><p>User berhasil login dan masuk ke sistem</p></div>
       <div class="step d-flex align-items-center"><svg width="11" height="10"><use href="#chk"/></svg><span style="margin:0 10px">Input username valid</span><svg width="6" height="9" viewBox="0 0 6 9" stroke-width="1.400"><path d="M1 1l4 3.500L1 8"/></svg><div class="ics ms-auto d-flex align-items-center"><svg width="9" height="9"><use href="#db"/></svg><svg width="9" height="9"><use href="#lines"/></svg></div></div>
       <div class="step d-flex align-items-center"><svg width="11" height="10"><use href="#chk"/></svg><span style="margin:0 10px">Input password valid</span><svg width="6" height="9" viewBox="0 0 6 9" stroke-width="1.400"><path d="M1 1l4 3.500L1 8"/></svg><div class="ics ms-auto d-flex align-items-center"><svg width="9" height="9"><use href="#db"/></svg><svg width="10" height="9"><use href="#img"/></svg><span style="margin-left:-1px">1</span><svg width="9" height="9"><use href="#lines"/></svg></div></div>
       <div class="step d-flex align-items-center"><svg width="11" height="10"><use href="#chk"/></svg><span style="margin:0 10px">Klik tombol Login atau Enter</span><svg width="6" height="9" viewBox="0 0 6 9" stroke-width="1.400"><path d="M1 1l4 3.500L1 8"/></svg><div class="ics ms-auto d-flex align-items-center"><svg width="10" height="9"><use href="#img"/></svg><span style="margin-left:-1px">1</span><svg width="9" height="9"><use href="#lines"/></svg><svg width="10" height="9" stroke-width="1.300"><use href="#chat"/></svg></div></div>
      </div>
     </div>
     <div style="margin-left:15px;padding-left:15px;border-left:1px solid #d9d9e0;height:480px;margin-top:-1px">
      <div class="meta"><div class="lb">Test Case</div><div class="vl" style="color:#9da2b4;padding-top:1px">QAPORT-1</div></div>
      <div class="meta"><div class="lb">Executed by</div><div class="vl d-flex align-items-center"><span class="av d-flex align-items-center justify-content-center">C</span><span style="margin-left:1px">Sasqiana Anwar Rizqi</span></div></div>
      <div class="meta"><div class="lb">Started at</div><div class="vl d-flex align-items-center"><svg width="10" height="11"><use href="#cal"/></svg>2025-07-26 21:27:07</div></div>
      <div class="meta"><div class="lb">Duration</div><div class="vl d-flex align-items-center" style="font-size:9px"><svg width="10" height="10"><use href="#clk"/></svg>1m 59s 122ms</div></div>
      <div class="meta"><div class="lb">Finished at</div><div class="vl d-flex align-items-center"><svg width="10" height="11"><use href="#cal"/></svg>2025-07-26 21:29:09</div></div>
      <div class="meta"><div class="lb">Result type</div><div class="vl d-flex align-items-center"><svg width="11" height="11"><use href="#hand"/></svg>Manual</div></div>
     </div>
    </div>
   </section>
  </div>
 </div>
</div>

<footer class="task d-flex">
 <div class="d-flex align-items-center" style="width:37px;padding:0 0 1px 10px"><svg width="16" height="16" viewBox="0 0 16 16" stroke="none" style="fill:#000"><path d="M0 2.200 6.500 1.300v6.200H0zM7.300 1.200 16 0v7.500H7.300zM0 8.300h6.500v6.200L0 13.700zM7.300 8.300H16V16l-8.700-1.300z"/></svg></div>
 <div class="sbox white d-flex align-items-center" style="padding-left:10px"><svg width="17" height="17" viewBox="0 0 17 17" stroke-width="1.300"><circle cx="10.500" cy="6.300" r="5.200"/><path d="m6.700 10-5.500 5.700"/></svg><span style="margin-left:11px">Search</span></div>
 <div class="tk d-flex align-items-center justify-content-center"><svg width="17" height="16" viewBox="0 0 17 16" stroke-width="1.200" stroke-linecap="butt"><path d="M1 1v2.500h10V1M1 15v-2.500h10V15M1 5.500h10v5H1zM15 1v14"/><path d="M15 4.500v3" stroke-width="3"/></svg></div>
 <div class="tk d-flex align-items-center justify-content-center" style="width:40px"><svg width="16" height="16" viewBox="0 0 16 16" stroke="none"><circle cx="8" cy="8" r="8" fill="#27a146"/><path d="M1 4a8 8 0 0 1 14 0H8a4 4 0 0 0-3.500 6z" fill="#e63c30"/><path d="M15 4a8 8 0 0 1-7 12l3.500-6A4 4 0 0 0 8 4z" fill="#fbc11a"/><circle cx="8" cy="8" r="3.700" fill="#fff"/><circle cx="8" cy="8" r="2.900" fill="#397ee8"/></svg></div>
 <div class="tk d-flex align-items-center justify-content-center" style="width:35px"><svg width="17" height="17" viewBox="0 0 17 17"><path d="M1.500 5.500 12 13.500M1.500 11.500 12 3.500" stroke="#087cc8" stroke-width="2.500"/><path d="M12 0.500 16.500 2.300v12.400L12 16.500z" fill="#25a2ec" stroke="none"/></svg></div>
 <div class="tk open d-flex align-items-center justify-content-center" style="width:28px;margin:0 4px 0 5px"><svg width="16" height="15" viewBox="0 0 16 15" stroke="none"><path fill="#e7a829" d="M0 1h6l1.500 2H16v10H0z"/><path fill="#ffd35a" d="M0 4h16v9H0z"/><path fill="#398fe0" d="M3.500 14.500V8.500h9v6h-2.700V11H6.200v3.500z"/></svg></div>
 <div class="tk d-flex align-items-center justify-content-center"><svg width="17" height="16" viewBox="0 0 17 16"><path d="M1 2h12v13H1z" fill="#f5f7e9" stroke="#555"/><path d="M2 8h10v6H2z" fill="#b6dd7a" stroke="none"/><path d="M3 5h8M3 7h7M2 2h10" stroke="#777" stroke-dasharray="1 1"/><path d="m15.500 1.500-7 9" stroke="#e4a11d" stroke-width="2.200"/><path d="m15.800.8-1 1.300" stroke="#b93030" stroke-width="2"/></svg></div>
 <div class="tk d-flex align-items-center justify-content-center" style="width:38px"><svg width="16" height="16" viewBox="0 0 16 16" stroke="none"><circle cx="8" cy="8" r="8" fill="#fbf4e7"/><circle cx="8" cy="8" r="6.800" fill="#080808"/><circle cx="8" cy="8" r="4.600" fill="#e21c1c"/></svg></div>
 <div class="tk open d-flex align-items-center justify-content-center" style="width:28px;margin:0 5px 0 4px"><svg width="17" height="16" viewBox="0 0 17 16"><path d="M5 2h11v9H5z" fill="#e1f3fd" stroke="#778992"/><path d="M5.500 7h2l1.500-3 2 5 1.500-3h3" stroke="#287ca9"/><path d="M7 14.500h7M10.500 12v2" stroke="#8d9798" stroke-width="2"/><path d="M1 8h3v6H1z" fill="#d7dde0" stroke="#888"/></svg></div>
 <div class="tk d-flex align-items-center justify-content-center"><svg width="17" height="16" viewBox="0 0 17 16" stroke="none"><path d="M4 0h13v15H4z" fill="#279b5f"/><path d="M10 0h7v5h-7z" fill="#42c487"/><path d="M10 10h7v5h-7z" fill="#174f31"/><path d="M0 3h10v10H0z" fill="#10703e"/><path d="m3 5.500 4 5M7 5.500l-4 5" stroke="#fff" stroke-width="1.600"/></svg></div>
 <div class="tk open d-flex align-items-center justify-content-center" style="width:36px;background:#f4f1e5"><svg width="17" height="17" viewBox="0 0 17 17"><ellipse cx="8.500" cy="8.500" rx="8" ry="8" fill="#df1b29" stroke="none"/><ellipse cx="8.500" cy="8.500" rx="3.300" ry="5.600" fill="#f4f1e5" stroke="none"/></svg></div>
 <div class="tk open d-flex align-items-center justify-content-center" style="width:28px;margin-left:5px"><svg width="16" height="16" viewBox="0 0 16 16" stroke="none"><circle cx="8" cy="8" r="7.800" fill="#6b2f91"/><circle cx="8" cy="8" r="6" fill="#fff"/><path d="M4.500 4.300 6.500 5h3l2-.7.500 3.500c0 2-1 2.700-2.500 3V14h-3v-2q-2 .2-2.500-1.500 1.300.5 2 0v-.3C4.500 9.800 4 9 4 7.800z" fill="#6b2f91"/></svg></div>
 <div class="ms-auto d-flex align-items-center" style="height:29px;padding:0 4px 1px 0">
  <svg width="12" height="8" viewBox="0 0 12 8" stroke-width="1.200"><path d="m1 6.500 5-5 5 5"/></svg>
  <svg width="12" height="14" viewBox="0 0 12 14" style="margin-left:12px"><path d="M1 1h10v9H1z" fill="#7da0b8" stroke="#5a7486"/><path d="M1 12h10" stroke="#c9b568" stroke-width="2"/></svg>
  <svg width="17" height="14" viewBox="0 0 17 14" style="margin-left:10px" stroke-width="1.200"><path d="M6 4.500h9v7H6zM16.300 6.500v3"/><path d="M8 6.500h5v3H8z" fill="#000"/><path d="M1 3h5v3H1zM2.200 1v2M4.800 1v2M3.500 6v5.500H6"/></svg>
  <svg width="14" height="14" viewBox="0 0 14 14" style="margin-left:10px" stroke-width="1.200"><path d="M1 11Q3 3 12.500 2M4 12q1.500-5.500 8.500-6.500M7 13q1-3 5.500-4M10 13.300l2.500-1.500"/></svg>
  <svg width="16" height="14" viewBox="0 0 16 14" style="margin-left:8px" stroke-width="1.100"><path d="M1 5h2l3-3v10L3 9H1zM8 5q1.300 2 0 4M10.300 3.500q2.500 3.500 0 7M12.700 2q3.600 5 0 10"/></svg>
  <span style="margin-left:10px;width:28px;font-size:11.500px;letter-spacing:-.35px">22:41</span>
  <svg width="16" height="16" viewBox="0 0 16 16" style="margin-left:17px"><path d="M0 1h16v11.500H9V16l-3.500-3.500H0z" fill="#000" stroke="none"/><path d="M3 4.500h10M3 7h10M3 9.500h7" stroke="#e5e0c2"/></svg>
  <i style="width:1px;height:29px;background:#b9b59d;margin-left:20px"></i>
 </div>
</footer>
<script src="https://cdn.jsdelivr.net/npm/bootstrap@5.3.0/dist/js/bootstrap.bundle.min.js"></script>
</body>
</html>
